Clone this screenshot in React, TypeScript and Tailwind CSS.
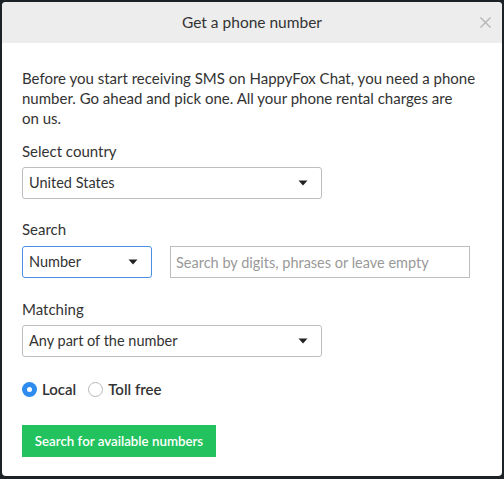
import { useState } from "react";

function Caret() {
  return (
    <svg width="10" height="6" viewBox="0 0 10 6" className="shrink-0">
      <path d="M0.5 0.5h9L5 5.5z" fill="#222" />
    </svg>
  );
}

function SelectBox({
  value,
  className,
}: {
  value: string;
  className: string;
}) {
  return (
    <div
      className={[
        "flex h-8 items-center justify-between rounded-[3px] border bg-white pl-[6px] pr-[13px] text-[14.5px] text-[#333]",
        className,
      ].join(" ")}
    >
      <span>{value}</span>
      <Caret />
    </div>
  );
}

function Radio({ checked, label }: { checked: boolean; label: string }) {
  return (
    <label className="flex items-center gap-[5px]">
      {checked ? (
        <span className="flex h-[15px] w-[15px] items-center justify-center rounded-full bg-[#2e8cf0]">
          <span className="h-[5px] w-[5px] rounded-full bg-white" />
        </span>
      ) : (
        <span className="h-[15px] w-[15px] rounded-full border border-[#b8b8b8] bg-white" />
      )}
      <span className="text-[15px] font-semibold text-[#333]">{label}</span>
    </label>
  );
}

export default function App() {
  const [query, setQuery] = useState("");

  return (
    <div
      className="h-[479px] w-[504px] bg-[#1d2226] pl-[2px] pt-[2px]"
      style={{ fontFamily: "Lato, 'Open Sans', sans-serif" }}
    >
      <div className="h-[474px] w-[500px] overflow-hidden rounded-[4px] bg-white">
        {/* Header */}
        <div className="relative flex h-[41px] items-center justify-center bg-[#ededed]">
          <h2 className="text-[15.5px] text-[#333]">Get a phone number</h2>
          <button
            type="button"
            className="absolute right-[11px] top-[15px] text-[#b3b3b3]"
          >
            <svg width="11" height="11" viewBox="0 0 11 11">
              <path
                d="M0.5 0.5l10 10M10.5 0.5l-10 10"
                stroke="currentColor"
                strokeWidth="1.3"
              />
            </svg>
          </button>
        </div>

        {/* Body */}
        <div className="px-5 pt-[25px] text-[15px] leading-5 text-[#333]">
          <p>
            Before you start receiving SMS on HappyFox Chat, you need a phone
            number. Go ahead and pick one. All your phone rental charges are
            <br />
            on us.
          </p>

          <p className="mt-[13px]">Select country</p>
          <SelectBox
            value="United States"
            className="mt-[6px] w-[300px] border-[#bdbdbd]"
          />

          <p className="mt-5">Search</p>
          <div className="mt-[7px] flex items-center gap-[18px]">
            <SelectBox
              value="Number"
              className="w-[130px] border-[#4a90e2]"
            />
            <input
              value={query}
              onChange={(e) => setQuery(e.target.value)}
              placeholder="Search by digits, phrases or leave empty"
              className="h-8 w-[300px] border border-[#bdbdbd] px-[5px] text-[14.5px] text-[#333] outline-none placeholder:text-[#999]"
            />
          </div>

          <p className="mt-[21px]">Matching</p>
          <SelectBox
            value="Any part of the number"
            className="mt-[6px] w-[300px] border-[#bdbdbd]"
          />

          <div className="mt-[22px] flex items-center gap-[12px]">
            <Radio checked label="Local" />
            <Radio checked={false} label="Toll free" />
          </div>

          <button
            type="button"
            className="mt-[26px] h-8 w-[194px] bg-[#22c35e] text-[13.3px] font-semibold text-white"
          >
            Search for available numbers
          </button>
        </div>
      </div>
    </div>
  );
}
